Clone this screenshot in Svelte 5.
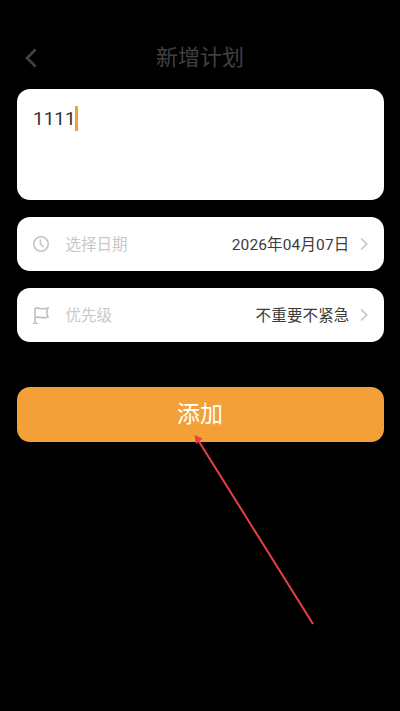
<script>
  const rows = [
    { id: 'date', label: '选择日期', value: '2026年04月07日' },
    { id: 'flag', label: '优先级', value: '不重要不紧急' }
  ];
</script>

<div class="page">
  <header class="head">
    <svg class="back" width="14" height="20" viewBox="0 0 14 20"><path d="M11.5 1.5 L3 10 L11.5 18.5" fill="none" stroke="#424242" stroke-width="2.6"/></svg>
    <h1>新增计划</h1>
  </header>
  <main class="content">
    <div class="note"><span class="typed">1111</span><i class="caret"></i></div>
    {#each rows as r}
      <div class="row">
        {#if r.id === 'date'}
          <svg class="icon" width="18" height="18" viewBox="0 0 18 18" fill="none" stroke="#c4c4c4" stroke-width="1.6"><circle cx="9" cy="9" r="7.2"/><path d="M8.4 4.6 V9.2 L11.6 12"/></svg>
        {:else}
          <svg class="icon" width="18" height="18" viewBox="0 0 18 18" fill="none" stroke="#c0c0c0" stroke-width="1.6"><path d="M3 17.5 V2.5 C6.5 1 10 4.4 16 2 L14.6 7 L16 11 C10.5 13 7 10 3 11.5"/><path d="M1 17.5 H6"/></svg>
        {/if}
        <span class="label">{r.label}</span>
        <span class="value">{r.value}</span>
        <svg class="chev" width="9" height="14" viewBox="0 0 9 14"><path d="M1.2 1.5 L6.7 7 L1.2 12.5" fill="none" stroke="#c4c4c4" stroke-width="1.6"/></svg>
      </div>
    {/each}
    <button class="add"><span>添加</span></button>
  </main>
  <svg class="arrow" width="400" height="711" viewBox="0 0 400 711">
    <path d="M313 624 L198 440" stroke="#e8403f" stroke-width="2" fill="none"/>
    <path d="M194.5 435 L202.5 438.5 L196 444 Z" fill="#e8403f"/>
  </svg>
</div>

<style>
  :global(body) { margin: 0; background: #000; }
  .page {
    position: relative;
    width: 400px;
    height: 711px;
    background: #000;
    overflow: hidden;
    font-family: "Roboto", "Noto Sans CJK SC", sans-serif;
  }
  .head {
    height: 89px;
    box-sizing: border-box;
    padding-top: 42px;
    position: relative;
    text-align: center;
  }
  .back { position: absolute; left: 24px; top: 48px; }
  h1 {
    margin: 0;
    font-size: 22px;
    line-height: 32px;
    font-weight: 400;
    color: #404040;
  }
  .content { padding: 0 16.5px; display: flex; flex-direction: column; }
  .note {
    height: 111px;
    background: #fff;
    border-radius: 13px;
    box-sizing: border-box;
    padding: 17px 16.5px;
    display: flex;
    align-items: flex-start;
    margin-bottom: 17px;
  }
  .typed { font-size: 19px; line-height: 25px; color: #333; }
  .caret { width: 3px; height: 25px; background: #f3a039; margin-left: -1px; flex: none; }
  .row {
    height: 54px;
    background: #fff;
    border-radius: 13px;
    display: flex;
    align-items: center;
    padding: 0 15px 0 15.5px;
    margin-bottom: 17px;
  }
  .row span { position: relative; top: -1px; }
  .icon { margin-right: 15.5px; flex: none; }
  .label { font-size: 15.5px; color: #c8c8c8; }
  .value { margin-left: auto; font-size: 15.5px; color: #3c3c3c; letter-spacing: 0.15px; }
  .chev { margin-left: 10px; flex: none; }
  .add {
    margin-top: 28px;
    height: 55px;
    border: 0;
    padding: 0;
    border-radius: 13px;
    background: #f3a039;
    color: #fff;
    font: inherit;
    font-size: 23px;
    line-height: 30px;
  }
  .arrow { position: absolute; left: 0; top: 0; pointer-events: none; }
</style>
